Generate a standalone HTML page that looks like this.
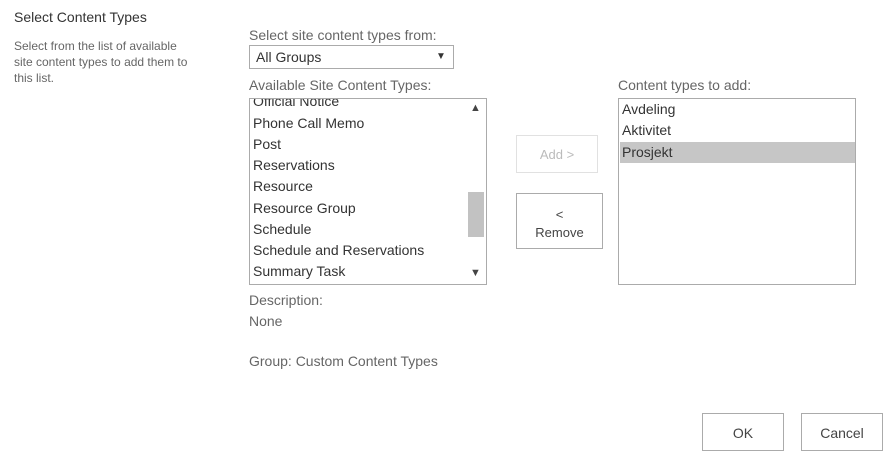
<!DOCTYPE html>
<html><head><style>
*{margin:0;padding:0;box-sizing:border-box}
body{width:895px;height:459px;background:#fff;font-family:"Liberation Sans",sans-serif;position:relative;overflow:hidden;color:#444}
.a{position:absolute;white-space:nowrap}
.lbl{font-size:14px;color:#666}
.box{position:absolute;border:1px solid #ababab;background:#fff}
.it{position:absolute;left:3px;font-size:14px;color:#333}
.btn{position:absolute;border:1px solid #ababab;background:#fff;font-size:13px;color:#444;text-align:center}
</style></head><body>
<div class="a" style="left:14px;top:9px;font-size:14px;color:#333">Select Content Types</div>
<div class="a" style="left:14px;top:38px;font-size:12px;color:#666;line-height:16px">Select from the list of available<br>site content types to add them to<br>this list.</div>
<div class="a lbl" style="left:249px;top:27px">Select site content types from:</div>
<div class="box" style="left:249px;top:45px;width:205px;height:24px"><span class="a" style="left:6px;top:3px;font-size:14px;color:#333">All Groups</span><span class="a" style="left:186px;top:5px;font-size:10px;color:#333">▼</span></div>
<div class="a lbl" style="left:249px;top:77px">Available Site Content Types:</div>
<div class="box" style="left:249px;top:98px;width:238px;height:187px;overflow:hidden">
<div class="it" style="top:-6px">Official Notice</div>
<div class="it" style="top:16px">Phone Call Memo</div>
<div class="it" style="top:37px">Post</div>
<div class="it" style="top:58px">Reservations</div>
<div class="it" style="top:79px">Resource</div>
<div class="it" style="top:101px">Resource Group</div>
<div class="it" style="top:122px">Schedule</div>
<div class="it" style="top:143px">Schedule and Reservations</div>
<div class="it" style="top:164px">Summary Task</div>
<div class="a" style="left:217px;top:0;width:19px;height:185px;background:#fff"></div>
<div class="a" style="left:220px;top:3px;font-size:11px;color:#444">▲</div>
<div class="a" style="left:220px;top:168px;font-size:11px;color:#444">▼</div>
<div class="a" style="left:218px;top:93px;width:16px;height:45px;background:#c2c2c2"></div>
</div>
<div class="a lbl" style="left:249px;top:292px">Description:</div>
<div class="a lbl" style="left:249px;top:313px">None</div>
<div class="a lbl" style="left:249px;top:353px">Group: Custom Content Types</div>
<div class="btn" style="left:516px;top:135px;width:82px;height:38px;line-height:38px;color:#bbb;border-color:#e1e1e1">Add &gt;</div>
<div class="btn" style="left:516px;top:193px;width:87px;height:56px;padding-top:12px;line-height:18px">&lt;<br>Remove</div>
<div class="a lbl" style="left:618px;top:77px">Content types to add:</div>
<div class="box" style="left:618px;top:98px;width:238px;height:187px">
<div class="it" style="top:2px">Avdeling</div>
<div class="it" style="top:23px">Aktivitet</div>
<div class="a" style="left:1px;top:43px;width:235px;height:21px;background:#c6c6c6"></div>
<div class="it" style="top:45px">Prosjekt</div>
</div>
<div class="btn" style="left:702px;top:413px;width:82px;height:38px;line-height:38px;font-size:14px">OK</div>
<div class="btn" style="left:801px;top:413px;width:82px;height:38px;line-height:38px;font-size:14px">Cancel</div>
</body></html>
